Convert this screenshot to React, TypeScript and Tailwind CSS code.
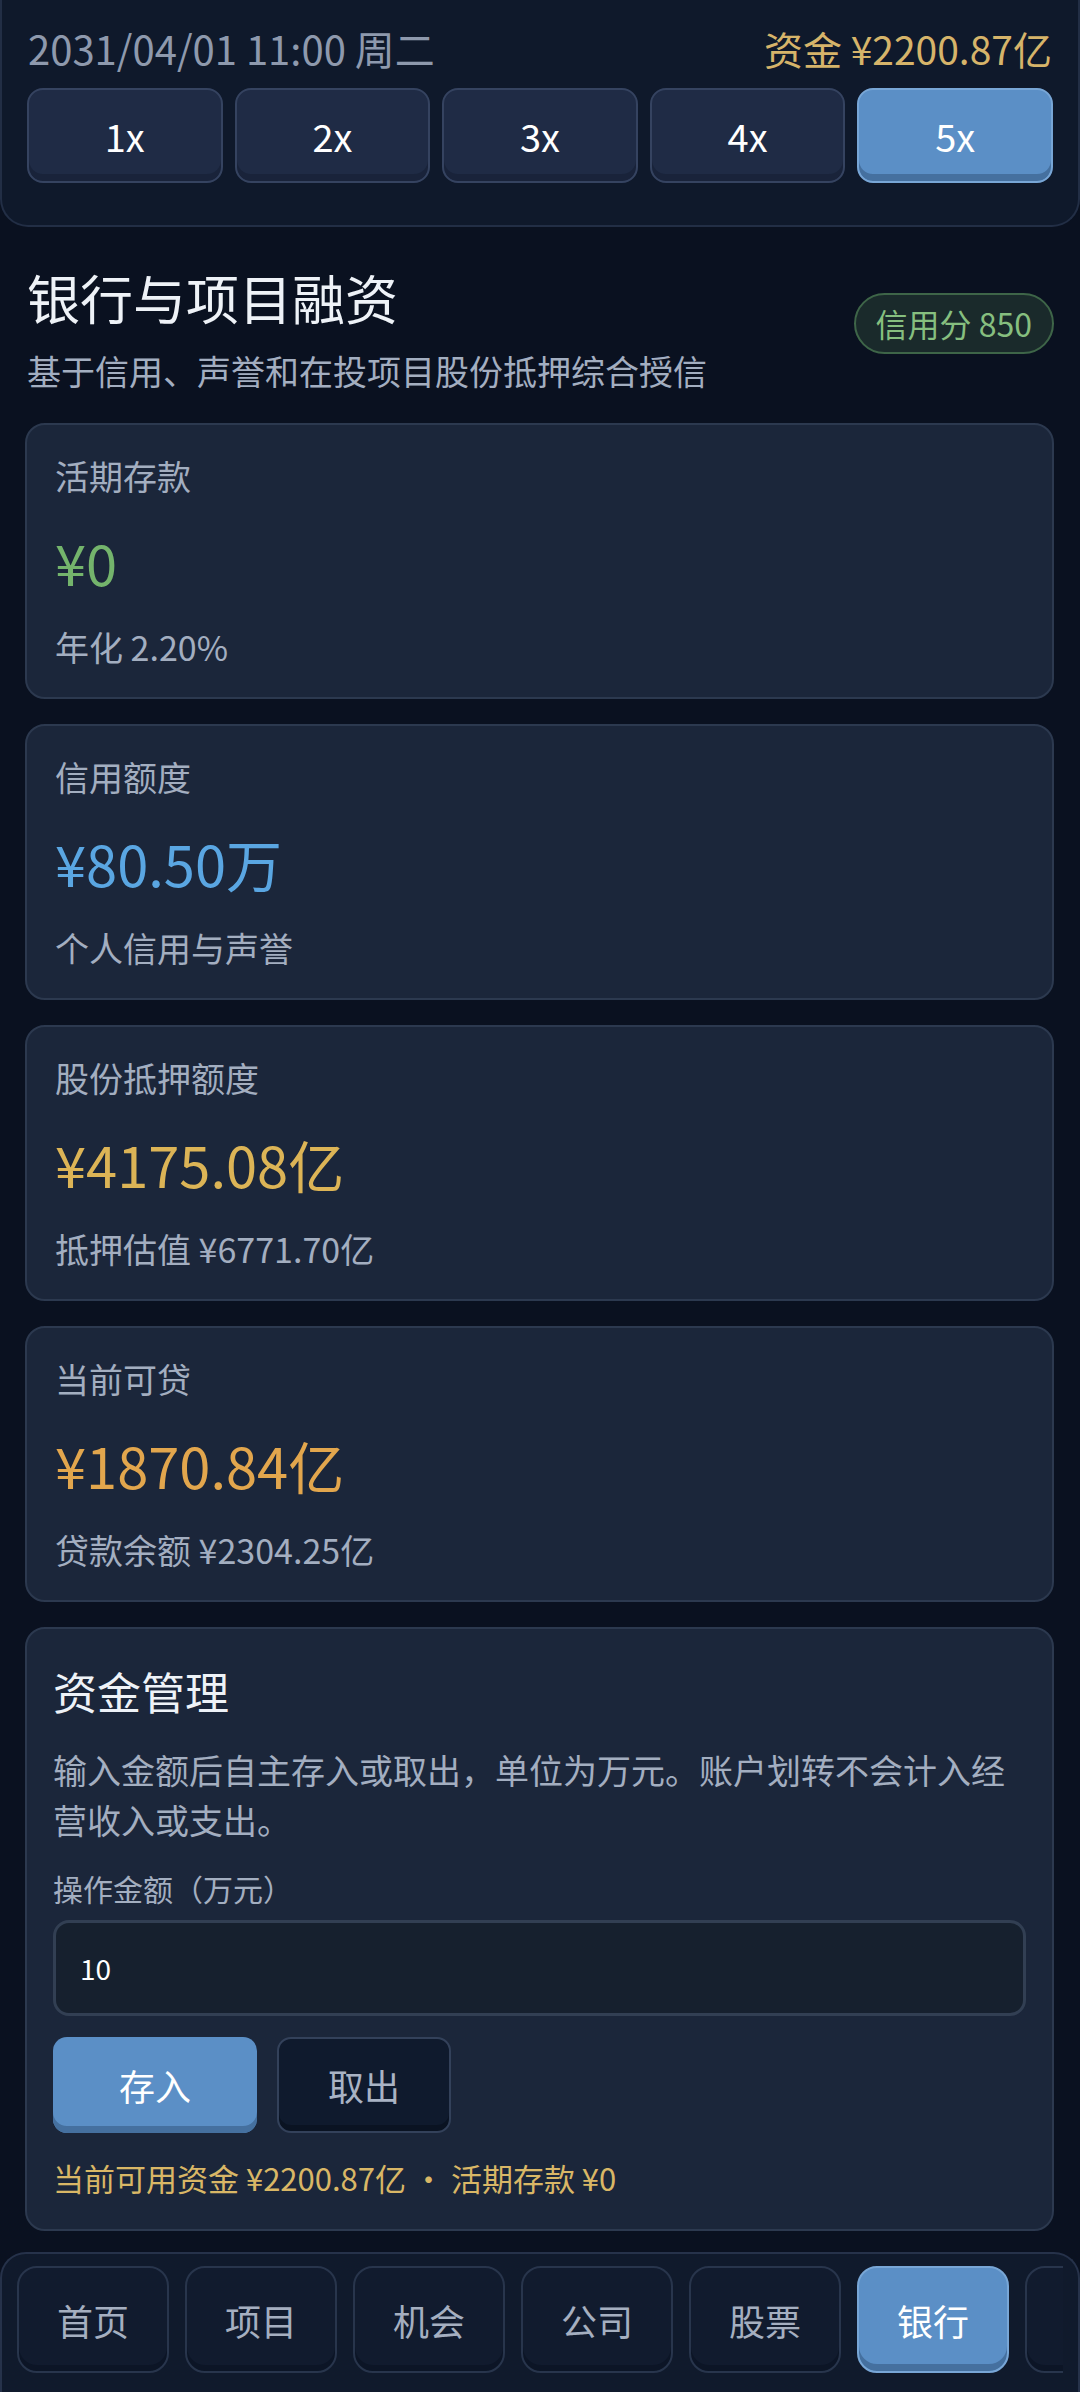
import React from "react";

const F = { fontFamily: '"Noto Sans CJK SC", "Noto Sans", sans-serif' };

function SpeedButton({ label, active }: { label: string; active?: boolean }) {
  return (
    <div
      className={
        active
          ? "flex h-[95px] items-center justify-center rounded-[16px] border-2 border-[#78a6d6] bg-[#5b8fc6] text-[38px] text-white shadow-[inset_0_-7px_0_#45709f]"
          : "flex h-[95px] items-center justify-center rounded-[16px] border-2 border-[#354360] bg-[#1f2b45] text-[38px] text-white shadow-[inset_0_-7px_0_#19233a]"
      }
    >
      {label}
    </div>
  );
}

function StatCard({
  label,
  value,
  valueClass,
  sub,
}: {
  label: string;
  value: string;
  valueClass: string;
  sub: string;
}) {
  return (
    <div className="flex h-[276px] flex-col rounded-[20px] border-2 border-[#2c394f] bg-[#1b263a] px-[28px] pt-[27px]">
      <div className="text-[34px] leading-[48px] text-[#a3aec0]">{label}</div>
      <div className={"mt-[25px] text-[56px] leading-[73px] " + valueClass}>{value}</div>
      <div className="mt-[25px] text-[34px] leading-[48px] text-[#a3aec0]">{sub}</div>
    </div>
  );
}

function NavTab({ label, active }: { label: string; active?: boolean }) {
  return (
    <div
      className={
        active
          ? "flex h-[107px] w-[152px] shrink-0 items-center justify-center rounded-[20px] border-2 border-[#78a6d6] bg-[#5b8fc6] text-[36px] text-white shadow-[inset_0_-7px_0_#45709f]"
          : "flex h-[107px] w-[152px] shrink-0 items-center justify-center rounded-[20px] border-2 border-[#28354c] bg-[#111b2e] text-[36px] text-[#a5afc0] shadow-[inset_0_-6px_0_#0c1526]"
      }
    >
      {label}
    </div>
  );
}

export default function App() {
  return (
    <div style={F} className="relative min-h-[2392px] w-[1080px] overflow-hidden bg-[#0a1120] text-white">
      {/* Header */}
      <div className="rounded-b-[28px] border-2 border-t-0 border-[#222e45] bg-[#0f192b] px-[25px] pb-[42px] pt-[24px]">
        <div className="flex h-[48px] items-center justify-between px-[1px]">
          <div className="text-[40px] leading-[48px] text-[#8e99ad]">2031/04/01 11:00 周二</div>
          <div className="text-[39px] leading-[48px] text-[#d6b46a]">资金 ¥2200.87亿</div>
        </div>
        <div className="mt-[16px] grid grid-cols-5 gap-[12px]">
          <SpeedButton label="1x" />
          <SpeedButton label="2x" />
          <SpeedButton label="3x" />
          <SpeedButton label="4x" />
          <SpeedButton label="5x" active />
        </div>
      </div>

      {/* Title */}
      <div className="mt-[36px] flex items-center justify-between pl-[27px] pr-[26px]">
        <div>
          <div className="text-[53px] leading-[68px] text-[#eef2f7]">银行与项目融资</div>
          <div className="mt-[16px] text-[34px] leading-[48px] text-[#a3aec0]">
            基于信用、声誉和在投项目股份抵押综合授信
          </div>
        </div>
        <div className="-mt-[12px] flex h-[61px] items-center rounded-full border-2 border-[#3e6548] bg-[#1a2a2b] px-[20px] text-[32px] text-[#86bf7f]">
          信用分 850
        </div>
      </div>

      {/* Cards */}
      <div className="mt-[28px] flex flex-col gap-[25px] pl-[25px] pr-[26px]">
        <StatCard label="活期存款" value="¥0" valueClass="text-[#74b46c]" sub="年化 2.20%" />
        <StatCard label="信用额度" value="¥80.50万" valueClass="text-[#5aa6e2]" sub="个人信用与声誉" />
        <StatCard label="股份抵押额度" value="¥4175.08亿" valueClass="text-[#dcb456]" sub="抵押估值 ¥6771.70亿" />
        <StatCard label="当前可贷" value="¥1870.84亿" valueClass="text-[#e2a64d]" sub="贷款余额 ¥2304.25亿" />

        {/* Fund management */}
        <div className="flex flex-col rounded-[20px] border-2 border-[#2c394f] bg-[#1b263a] px-[26px] pb-[30px] pt-[34px]">
          <div className="text-[44px] leading-[57px] text-[#eef2f7]">资金管理</div>
          <div className="mt-[25px] text-[34px] leading-[50px] text-[#a3aec0]">
            输入金额后自主存入或取出，单位为万元。账户划转不会计入经营收入或支出。
          </div>
          <div className="mt-[22px] text-[30px] leading-[42px] text-[#a3aec0]">操作金额（万元）</div>
          <div className="mt-[11px] flex h-[96px] items-center rounded-[16px] border-[3px] border-[#323f53] bg-[#16202e] px-[24px] text-[28px] text-white">
            10
          </div>
          <div className="mt-[21px] flex gap-[20px]">
            <div className="flex h-[96px] w-[204px] items-center justify-center rounded-[14px] bg-[#5b8fc6] text-[36px] text-white shadow-[inset_0_-7px_0_#45709f]">
              存入
            </div>
            <div className="flex h-[96px] w-[174px] items-center justify-center rounded-[14px] border-2 border-[#33415a] bg-[#0f1a2d] text-[36px] text-[#a9b3c4] shadow-[inset_0_-6px_0_#0a1322]">
              取出
            </div>
          </div>
          <div className="mt-[24px] text-[31px] leading-[42px] text-[#d9b766]">
            当前可用资金 ¥2200.87亿 · 活期存款 ¥0
          </div>
        </div>
      </div>

      {/* Bottom nav */}
      <div className="fixed bottom-0 left-0 h-[140px] w-[1080px] rounded-t-[26px] border-2 border-b-0 border-[#26324a] bg-[#101a2c] px-[15px] pt-[12px]">
        <div className="flex gap-[16px] overflow-hidden">
          <NavTab label="首页" />
          <NavTab label="项目" />
          <NavTab label="机会" />
          <NavTab label="公司" />
          <NavTab label="股票" />
          <NavTab label="银行" active />
          <NavTab label="设置" />
        </div>
      </div>
    </div>
  );
}
